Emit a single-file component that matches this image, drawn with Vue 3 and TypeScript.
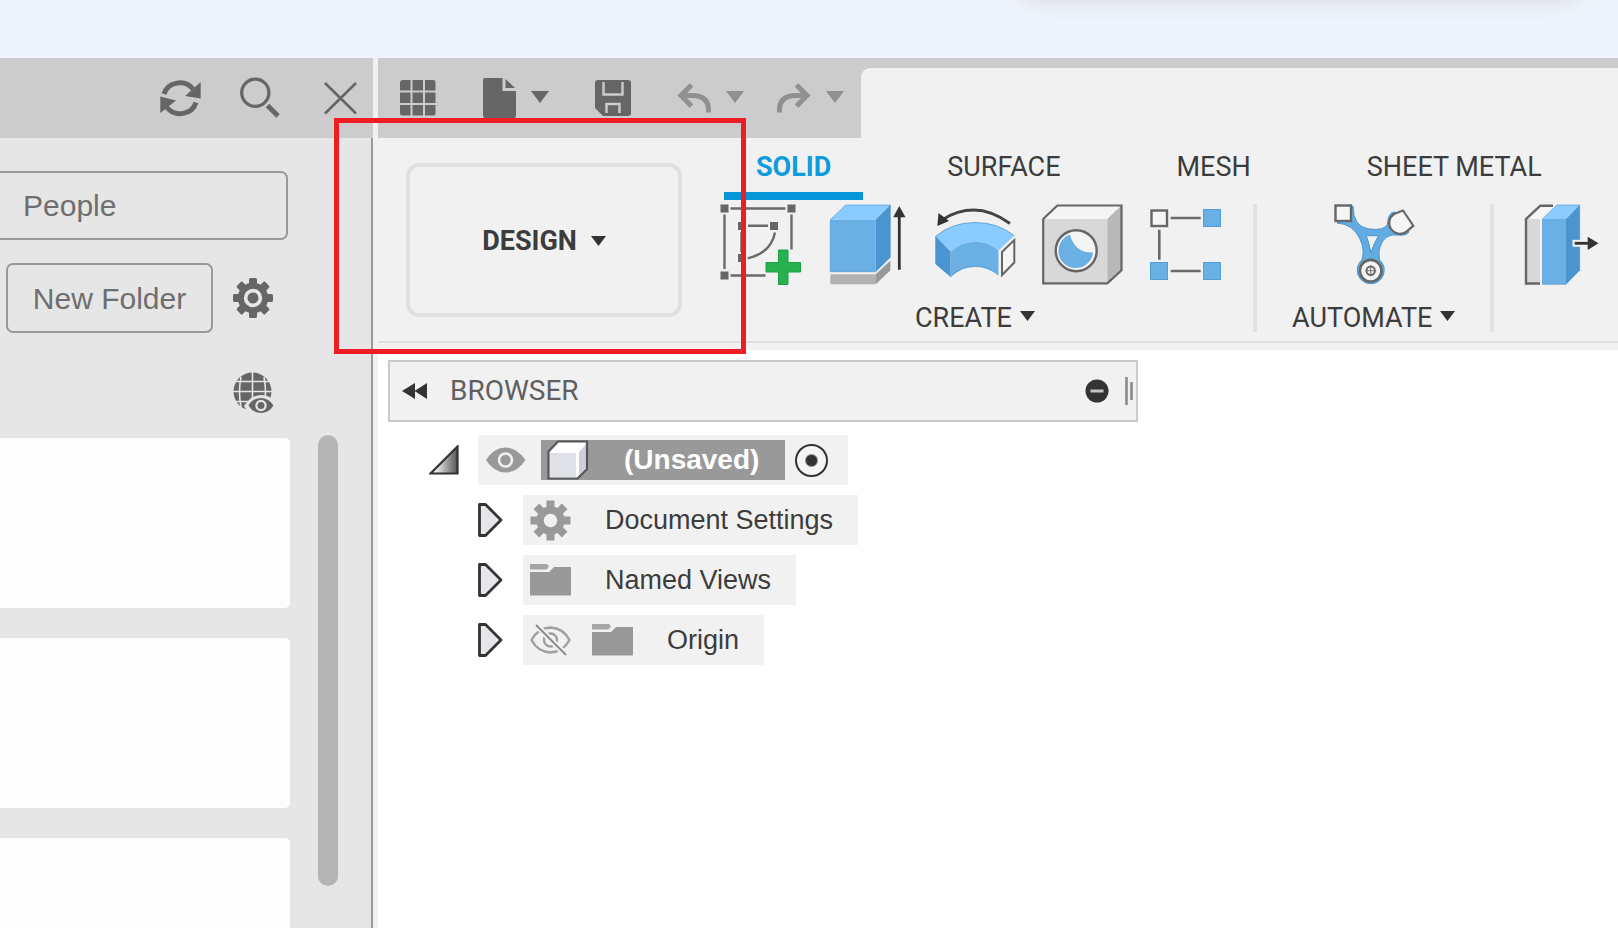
<script setup lang="ts">
import { ref } from 'vue'

type Tab = { id: string; label: string }
type TreeNode = { label: string; hidden?: boolean; icon: 'gear' | 'folder' }

const tabs: Tab[] = [
  { id: 'solid', label: 'SOLID' },
  { id: 'surface', label: 'SURFACE' },
  { id: 'mesh', label: 'MESH' },
  { id: 'sheet', label: 'SHEET METAL' },
]
const activeTab = ref('solid')

const nodes: TreeNode[] = [
  { label: 'Document Settings', icon: 'gear' },
  { label: 'Named Views', icon: 'folder' },
  { label: 'Origin', icon: 'folder', hidden: true },
]

const teeth = [0, 45, 90, 135, 180, 225, 270, 315]
const gridCells = [0, 1, 2, 3, 4, 5, 6, 7, 8]
</script>

<template>
  <div class="page">
    <div class="backdrop"><div class="floating"></div></div>

    <div class="app">
      <aside class="data-panel">
        <header class="panel-head">
          <button class="bare" aria-label="Refresh">
            <svg width="42" height="42" viewBox="0 0 42 42">
              <g fill="none" stroke="#666" stroke-width="5">
                <path d="M5 17A16.5 15.5 0 0 1 34 12" />
                <path d="M37 25.5A16.5 15.5 0 0 1 8 30.5" />
              </g>
              <path d="M41.700 5V21.600L26 19ZM1.300 19.500V36L17 23.500Z" fill="#666" />
            </svg>
          </button>
          <button class="bare" aria-label="Search">
            <svg width="42" height="42" viewBox="0 0 42 42" fill="none" stroke="#666">
              <circle cx="16.300" cy="15.700" r="13.600" stroke-width="3.200" />
              <path d="M28.500 28.500L39 39" stroke-width="5" />
            </svg>
          </button>
          <button class="bare" aria-label="Close panel">
            <svg width="44" height="42" viewBox="0 0 44 42">
              <path d="M6 6L37 36.500M37 6L6 36.500" stroke="#666" stroke-width="2.600" />
            </svg>
          </button>
        </header>

        <button class="outlined people">People</button>
        <div class="folder-row">
          <button class="outlined folder-btn">New Folder</button>
          <button class="bare" aria-label="Settings">
            <svg width="42" height="42" viewBox="-21 -21 42 42">
              <rect v-for="a in teeth" :key="a" x="-4" y="-20" width="8" height="9" rx="1.500" fill="#666" :transform="`rotate(${a})`" />
              <circle r="12.200" fill="none" stroke="#666" stroke-width="6" />
              <circle r="5.500" fill="#666" />
            </svg>
          </button>
        </div>
        <div class="web-row">
          <button class="bare" aria-label="Open on the web">
            <svg width="42" height="42" viewBox="0 0 42 42">
              <circle cx="19.500" cy="19.500" r="19" fill="#666" />
              <path d="M19.500 0V40M0 19.500H40M3 9.500H36M3 29.500H36M8 5Q5 20 8 35M31 5Q34 20 31 35" fill="none" stroke="#e6e6e6" stroke-width="1.600" />
              <path d="M11 34Q18 23 28.500 23T44 34V42H16Z" fill="#e6e6e6" />
              <path d="M15.500 33.500Q20 26 28 26T40.500 33.500Q36 41 28 41T15.500 33.500Z" fill="#666" />
              <circle cx="28" cy="33.500" r="4.600" fill="#666" stroke="#e6e6e6" stroke-width="2.200" />
            </svg>
          </button>
        </div>
        <div class="list">
          <div class="cards">
            <div v-for="n in 3" :key="n" class="card"></div>
          </div>
          <div class="scrollbar"></div>
        </div>
      </aside>

      <main class="workspace">
        <div class="quick-bar">
          <nav class="quick-tools" aria-label="Quick access">
            <button class="bare" aria-label="Show data panel">
              <svg width="36" height="36" viewBox="0 0 36 36">
                <clipPath id="grid-clip"><rect width="36" height="36" rx="3" /></clipPath>
                <g clip-path="url(#grid-clip)">
                  <rect v-for="c in gridCells" :key="c" :x="(c % 3) * 12.5" :y="Math.floor(c / 3) * 12.5" width="10.500" height="10.500" fill="#666" />
                </g>
              </svg>
            </button>
            <div class="pair">
              <button class="bare" aria-label="File">
                <svg width="34" height="40" viewBox="0 0 34 40" fill="#666">
                  <path d="M3 0H20.500V13H34V38Q34 40 32 40H3Q1 40 1 38V2Q1 0 3 0Z" />
                  <path d="M23.500 1L33 10H23.500Z" />
                </svg>
              </button>
              <button class="bare" aria-label="File menu">
                <svg class="caret" width="18" height="12" viewBox="0 0 18 12"><path d="M0 0H18L9 12Z" fill="#666" /></svg>
              </button>
            </div>
            <button class="bare" aria-label="Save">
              <svg width="36" height="36" viewBox="0 0 36 36">
                <path d="M3 0H33Q36 0 36 3V33Q36 36 33 36H8L0 28V3Q0 0 3 0Z" fill="#666" />
                <path d="M8.500 2V14.500H27.500V2M11.500 33V24H24.500V33" fill="none" stroke="#ccc" stroke-width="2.400" />
              </svg>
            </button>
            <div class="history">
              <div class="pair">
                <button class="bare" aria-label="Undo">
                  <svg width="34" height="36" viewBox="0 0 34 36" fill="none" stroke="#909090" stroke-width="5">
                    <path d="M31.500 32.500V30Q31.500 15.500 15 15.500H4" />
                    <path d="M14.500 5L4 15.500L14.500 26" />
                  </svg>
                </button>
                <button class="bare" aria-label="Undo history">
                  <svg class="caret" width="18" height="12" viewBox="0 0 18 12"><path d="M0 0H18L9 12Z" fill="#909090" /></svg>
                </button>
              </div>
              <div class="pair">
                <button class="bare" aria-label="Redo">
                  <svg width="34" height="36" viewBox="0 0 34 36" fill="none" stroke="#909090" stroke-width="5">
                    <path d="M2.500 32.500V30Q2.500 15.500 19 15.500H30" />
                    <path d="M19.500 5L30 15.500L19.500 26" />
                  </svg>
                </button>
                <button class="bare" aria-label="Redo history">
                  <svg class="caret" width="18" height="12" viewBox="0 0 18 12"><path d="M0 0H18L9 12Z" fill="#909090" /></svg>
                </button>
              </div>
            </div>
          </nav>
          <div class="document-tab"></div>
        </div>

        <section class="ribbon">
          <button class="design">
            DESIGN
            <svg width="15" height="10" viewBox="0 0 15 10"><path d="M0 0H15L7.500 10Z" fill="#333" /></svg>
          </button>

          <div class="ribbon-body">
            <nav class="tabs">
              <button v-for="t in tabs" :key="t.id" class="tab" :class="{ active: t.id === activeTab }" @click="activeTab = t.id">
                {{ t.label }}
              </button>
            </nav>

            <div class="groups">
              <div class="group create">
                <div class="tools">
                  <button class="bare" aria-label="Create sketch">
                    <svg width="82" height="82" viewBox="0 0 82 82">
                      <g fill="#666">
                        <rect x="0.500" y="0.500" width="8" height="8" /><rect x="67.500" y="0.500" width="8" height="8" />
                        <rect x="0.500" y="67.500" width="8" height="8" /><rect x="18" y="18" width="8" height="8" />
                        <rect x="50" y="18" width="8" height="8" /><rect x="18" y="50" width="8" height="8" />
                      </g>
                      <path d="M10.500 4.500H65.500M4.500 10.500V65M71.500 10.500V45.500M10.500 71.500H45.500M28 21.700H48M21.500 28V48M55 28.500Q51 49 27.700 54.300" fill="none" stroke="#6a6a6a" stroke-width="2.400" />
                      <path d="M58.500 46H68V58.500H80.500V68H68V80.500H58.500V68H46V58.500H58.500Z" fill="#27b150" stroke="#1c9e43" />
                    </svg>
                  </button>
                  <button class="bare" aria-label="Extrude">
                    <svg width="82" height="82" viewBox="0 0 82 82">
                      <path d="M3.300 70.300H48.700V80.300H3.300Z" fill="#b2b2b2" />
                      <path d="M48.700 70.300L63.300 56.700V66.500L48.700 80.300Z" fill="#989898" />
                      <path d="M3.300 15.700L18.700 1H63.300L48.700 15.700Z" fill="#8accff" />
                      <path d="M3.300 15.700H48.700V67.700H3.300Z" fill="#6ab0e5" />
                      <path d="M48.700 15.700L63.300 1V53.300L48.700 67.700Z" fill="#4a95cf" />
                      <path d="M3.300 15.700L18.700 1H63.300V53.300L48.700 67.700H3.300Z" fill="none" stroke="#4393cf" stroke-opacity="0.600" />
                      <path d="M72.300 12V65.700" stroke="#333" stroke-width="2.800" />
                      <path d="M72.300 2L78.500 13.300H66.200Z" fill="#333" />
                    </svg>
                  </button>
                  <button class="bare" aria-label="Revolve">
                    <svg width="82" height="82" viewBox="0 0 82 82">
                      <path d="M1.700 32.300Q18 18.500 41 18.500T80.300 31.700L65 46Q55 37.700 41 37.700T16.700 47.700Z" fill="#8accff" />
                      <path d="M1.700 32.300L16.700 47.700V72.700L1.700 60Z" fill="#4a95cf" />
                      <path d="M16.700 47.700Q27 37.700 41 37.700T64.500 46V71Q54 62.500 41 62.500T16.700 72.700Z" fill="#6ab0e5" />
                      <path d="M1.700 32.300Q18 18.500 41 18.500T80.300 31.700M1.700 32.300V60L16.700 72.700Q27 62.500 41 62.500T64 71" fill="none" stroke="#4393cf" stroke-opacity="0.700" />
                      <path d="M68 48L80.300 36V58.500L68 71Z" fill="#f5f5f5" stroke="#666" stroke-width="2" />
                      <path d="M9 15.500Q23 6 40 6T76 19.500" fill="none" stroke="#444" stroke-width="2.800" />
                      <path d="M3.300 22L4.500 9L15 17Z" fill="#333" />
                    </svg>
                  </button>
                  <button class="bare" aria-label="Hole">
                    <svg width="82" height="82" viewBox="1 0 82 82">
                      <path d="M3.200 15L17.300 1.500H81.500L67.300 15Z" fill="#f4f4f4" />
                      <path d="M3.200 15H67.300V79.300H3.200Z" fill="#d8d8d8" />
                      <path d="M67.300 15L81.500 1.500V66.300L67.300 79.300Z" fill="#b8b8b8" />
                      <path d="M3.200 15L17.300 1.500H81.500V66.300L67.300 79.300H3.200Z" fill="none" stroke="#666" stroke-width="2.200" />
                      <circle cx="36.200" cy="46.700" r="20.500" fill="#f4f4f4" stroke="#666" stroke-width="2.400" />
                      <path d="M30 30.500A17.300 17.300 0 1 0 53 48.500Q34.500 49 30 30.500Z" fill="#6ab0e5" />
                    </svg>
                  </button>
                  <button class="bare" aria-label="Rectangular pattern">
                    <svg width="82" height="82" viewBox="0 0 82 82">
                      <path d="M22.700 14H52.700M22.700 67H52.700M11.300 25.700V55.700" stroke="#6a6a6a" stroke-width="2.600" />
                      <rect x="3.500" y="6.500" width="15.500" height="15.500" fill="#f5f5f5" stroke="#666" stroke-width="2.400" />
                      <g fill="#6ab0e5" stroke="#4f9fd9">
                        <rect x="55.500" y="5.500" width="17" height="17" /><rect x="2.500" y="58.500" width="17" height="17" />
                        <rect x="55.500" y="58.500" width="17" height="17" />
                      </g>
                    </svg>
                  </button>
                </div>
                <button class="group-label">
                  CREATE
                  <svg width="15" height="10" viewBox="0 0 15 10"><path d="M0 0H15L7.500 10Z" fill="#333" /></svg>
                </button>
              </div>

              <div class="group automate">
                <div class="tools">
                  <button class="bare" aria-label="Automated modeling">
                    <svg width="82" height="82" viewBox="0 0 82 82">
                      <path d="M20 2Q20 23 36 25Q52 27 54.500 20Q55 8 62 8L76 28Q73 32 66 31Q51 29 47 43Q45 49 46.500 56A13.500 13.500 0 1 1 29 56Q32 45 27 35Q20 20 4 19Z" fill="#63ace2" stroke="#4794cc" />
                      <path d="M33.300 31.700H45.500Q41 39 38 48.500Q36 39 33.300 31.700Z" fill="#f1f1f1" stroke="#4794cc" />
                      <rect x="2.500" y="1.500" width="15.500" height="15.500" fill="#f5f5f5" stroke="#666" stroke-width="2.400" />
                      <path d="M61 10L70 6.500L80.300 21.700L73 28A10 10 0 1 1 61 10Z" fill="#f5f5f5" stroke="#666" stroke-width="2.200" />
                      <circle cx="37.700" cy="66.700" r="10.800" fill="#f4f4f4" stroke="#666" stroke-width="2.600" />
                      <circle cx="37.700" cy="66.700" r="4.200" fill="none" stroke="#666" stroke-width="2" />
                      <path d="M37.700 61V72.400M32 66.700H43.400" stroke="#777" />
                    </svg>
                  </button>
                </div>
                <button class="group-label">
                  AUTOMATE
                  <svg width="15" height="10" viewBox="0 0 15 10"><path d="M0 0H15L7.500 10Z" fill="#333" /></svg>
                </button>
              </div>

              <div class="group modify">
                <div class="tools">
                  <button class="bare" aria-label="Press pull">
                    <svg width="82" height="82" viewBox="0 0 82 82">
                      <path d="M4 15L18.300 1.700H32L18.500 15Z" fill="#f6f6f6" />
                      <path d="M4 15H18V79.500H4Z" fill="#d8d8d8" />
                      <path d="M31 1.700H18.300L4 15V79.500H18" fill="none" stroke="#666" stroke-width="2.400" />
                      <path d="M20.500 15L35 1H57.700L44 15Z" fill="#8accff" />
                      <path d="M20.500 15H44V80.300H20.500Z" fill="#6ab0e5" />
                      <path d="M44 15L57.700 1V66.300L44 80.300Z" fill="#4a95cf" />
                      <path d="M20.500 15L35 1H57.700V66.300L44 80.300H20.500Z" fill="none" stroke="#4393cf" stroke-opacity="0.600" />
                      <path d="M50.500 39.300H64" stroke="#f1f1f1" stroke-width="7" />
                      <path d="M52.700 39.300H67" stroke="#333" stroke-width="2.800" />
                      <path d="M65.700 32.700L76.500 39.300L65.700 46Z" fill="#333" />
                    </svg>
                  </button>
                </div>
              </div>
            </div>
          </div>
        </section>

        <section class="canvas">
          <header class="browser-head">
            <button class="bare" aria-label="Collapse browser">
              <svg width="28" height="16" viewBox="0 0 28 16"><path d="M15 0V16L2 8ZM27 0V16L14.500 8Z" fill="#333" /></svg>
            </button>
            <h2>BROWSER</h2>
            <button class="bare" aria-label="Minimize browser">
              <svg width="24" height="24" viewBox="0 0 24 24">
                <circle cx="12" cy="12" r="11.500" fill="#333" /><path d="M5.500 12H18.500" stroke="#c4c4c4" stroke-width="3" />
              </svg>
            </button>
            <svg class="grip" width="8" height="28" viewBox="0 0 8 28">
              <path d="M1.500 0V28M6.500 5V23" stroke="#8a8a8a" stroke-width="2.600" />
            </svg>
          </header>

          <ul class="tree">
            <li class="node root">
              <button class="bare" aria-label="Collapse document">
                <svg width="30" height="30" viewBox="0 0 30 30">
                  <defs><linearGradient id="fold" x1="0.200" x2="1"><stop stop-color="#eee" /><stop offset="1" stop-color="#555" /></linearGradient></defs>
                  <path d="M1.500 28.500L28.500 1.500V28.500Z" fill="url(#fold)" stroke="#333" stroke-width="2.200" />
                </svg>
              </button>
              <div class="chip">
                <button class="bare" aria-label="Toggle visibility">
                  <svg width="42" height="26" viewBox="0 0 42 26">
                    <path d="M1 13Q9 0.500 20.500 0.500T40.500 13Q32 25.500 20.500 25.500T1 13Z" fill="#999" />
                    <circle cx="20.500" cy="13" r="6.500" fill="#999" stroke="#f1f1f1" stroke-width="2.600" />
                  </svg>
                </button>
                <span class="selected">
                  <svg width="42" height="40" viewBox="0 0 42 40">
                    <path d="M1.500 11.500L11 1.500H40V29L30.500 38.500H1.500Z" fill="#fff" />
                    <path d="M3 13H29V37H3Z" fill="#e0e1e6" />
                    <path d="M32 12L39 4V28L32 35Z" fill="#cfd0d7" />
                    <path d="M1.500 11.500L11 1.500H40V29L30.500 38.500H1.500Z" fill="none" stroke="#53555a" stroke-width="2.200" />
                  </svg>
                  (Unsaved)
                </span>
                <input class="activate" type="radio" checked aria-label="Activate document" />
              </div>
            </li>
            <li v-for="n in nodes" :key="n.label" class="node">
              <button class="bare" :aria-label="`Expand ${n.label}`">
                <svg width="25" height="34" viewBox="0 0 25 34">
                  <path d="M1.500 1.500H7.500L23 17L7.500 32.500H1.500Z" fill="#e6e7ea" stroke="#333" stroke-width="2.800" stroke-linejoin="round" />
                </svg>
              </button>
              <div class="chip">
                <button v-if="n.hidden" class="bare" :aria-label="`Show ${n.label}`">
                  <svg width="41" height="32" viewBox="0 0 41 32" fill="none" stroke="#a0a0a0">
                    <path d="M1.500 16Q8 4 20.500 3.500Q33 4 39.500 16Q33 28 20.500 28.500Q8 28 1.500 16Z" stroke-width="2.400" />
                    <circle cx="20.500" cy="16" r="6.500" stroke-width="2.400" />
                    <path d="M6 1L36 31" stroke="#f1f1f1" stroke-width="6" />
                    <path d="M6 1L36 31" stroke="#888" stroke-width="1.800" />
                  </svg>
                </button>
                <svg v-if="n.icon === 'gear'" width="41" height="41" viewBox="-20.5 -20.5 41 41">
                  <rect v-for="a in teeth" :key="a" x="-4" y="-20" width="8" height="9" fill="#999" :transform="`rotate(${a})`" />
                  <circle r="10.500" fill="none" stroke="#999" stroke-width="7.500" />
                </svg>
                <svg v-else width="41" height="34" viewBox="0 0 41 34" fill="#999">
                  <path d="M0 1H17L19 3.500L16.500 6.500H0Z" opacity="0.850" />
                  <path d="M0 9H19L24 4H41V32.500H0Z" />
                </svg>
                <span class="node-label">{{ n.label }}</span>
              </div>
            </li>
          </ul>
        </section>
      </main>
    </div>

    <div class="highlight"></div>
  </div>
</template>

<style>
body {
  margin: 0;
}
</style>

<style scoped>
.page {
  position: relative;
  display: flex;
  flex-direction: column;
  height: 100vh;
  overflow: hidden;
  font-family: "Liberation Sans", Arial, sans-serif;
  color: #3c3c3c;
  background: #fff;
}
.page * {
  box-sizing: border-box;
}
svg {
  display: block;
  flex: none;
}
button {
  font: inherit;
  color: inherit;
  cursor: pointer;
}
.bare {
  display: block;
  flex: none;
  padding: 0;
  border: 0;
  background: none;
}
.backdrop {
  position: relative;
  flex: none;
  height: 58px;
  overflow: hidden;
  background: #eff3fb;
}
.floating {
  position: absolute;
  top: -40px;
  right: 40px;
  width: 556px;
  height: 36px;
  border-radius: 12px;
  box-shadow: 0 4px 22px rgba(70, 70, 60, 0.15);
}
.app {
  display: flex;
  flex: 1;
  min-height: 0;
}

/* Data panel */
.data-panel {
  display: flex;
  flex-direction: column;
  flex: none;
  width: 373px;
  background: #e6e6e6;
  box-shadow: inset -2px 0 #999;
}
.panel-head {
  display: flex;
  flex: none;
  align-items: center;
  justify-content: flex-end;
  gap: 38px;
  height: 80px;
  padding-right: 10px;
  background: #ccc;
}
.outlined {
  border: 2px solid #999;
  border-radius: 7px;
  background: #e6e6e6;
  color: #6e6e6e;
  font-size: 30px;
  line-height: 34px;
}
.people {
  width: 288px;
  height: 69px;
  margin-top: 33px;
  padding: 0 0 0 23px;
  border-left: 0;
  border-radius: 0 7px 7px 0;
  text-align: left;
}
.folder-row {
  display: flex;
  align-items: center;
  gap: 19px;
  margin-top: 23px;
  padding-left: 6px;
}
.folder-btn {
  width: 207px;
  height: 70px;
  padding: 2px 0 0;
}
.web-row {
  display: flex;
  justify-content: flex-end;
  margin-top: 39px;
  padding-right: 98px;
}
.list {
  display: flex;
  flex: 1;
  gap: 28px;
  min-height: 0;
  margin-top: 21px;
  overflow: hidden;
}
.cards {
  display: flex;
  flex-direction: column;
  gap: 30px;
  width: 290px;
  padding-top: 3px;
}
.card {
  flex: none;
  height: 170px;
  border-radius: 0 5px 5px 0;
  background: #fdfdfd;
}
.scrollbar {
  width: 20px;
  margin-bottom: 42px;
  border-radius: 10px;
  background: #b5b5b5;
}

/* Workspace */
.workspace {
  display: flex;
  flex: 1;
  flex-direction: column;
  min-width: 0;
  border-left: 5px solid #f1f1f1;
  overflow: hidden;
}
.quick-bar {
  display: flex;
  flex: none;
  height: 80px;
  background: #ccc;
}
.quick-tools {
  display: flex;
  flex: none;
  align-items: center;
  gap: 46px;
  padding: 0 17px 0 22px;
}
.pair {
  display: flex;
  align-items: center;
  gap: 15px;
}
.caret {
  margin-bottom: 3px;
}
.history {
  display: flex;
  gap: 33px;
}
.document-tab {
  flex: 1;
  margin-top: 10px;
  border-radius: 9px 0 0;
  background: #f1f1f1;
}
.ribbon {
  display: flex;
  flex: none;
  gap: 38px;
  height: 212px;
  padding-left: 28px;
  background: linear-gradient(#e0e0e0, #e0e0e0) 0 203px / 100% 2px no-repeat #f1f1f1;
  font-family: Roboto, "Liberation Sans", sans-serif;
  font-size: 27px;
  line-height: 32px;
}
.design {
  display: flex;
  flex: none;
  align-items: center;
  justify-content: center;
  gap: 14px;
  width: 276px;
  height: 154px;
  margin-top: 25px;
  padding: 2px 0 0;
  border: 4px solid #e0e0e0;
  border-radius: 13px;
  background: #f1f1f1;
  font-weight: 700;
}
.ribbon-body {
  flex: 1;
  min-width: 0;
}
.tabs {
  display: flex;
  gap: 52px;
  padding: 11px 0 0 4px;
}
.tab {
  height: 51px;
  padding: 2px 32px 10px;
  border: 0;
  border-bottom: 8px solid transparent;
  background: none;
  white-space: nowrap;
}
.tab.active {
  border-color: #0696d7;
  color: #0f9bdc;
  font-weight: 700;
}
.groups {
  display: flex;
  margin-top: 4px;
}
.group {
  display: flex;
  flex: none;
  flex-direction: column;
  align-items: center;
  height: 128px;
}
.group + .group {
  border-left: 4px solid #e2e2e2;
}
.create {
  padding-right: 23px;
}
.automate {
  padding: 0 35px;
}
.modify {
  padding: 0 16px 0 28px;
}
.tools {
  display: flex;
  gap: 25px;
}
.group-label {
  display: flex;
  align-items: center;
  gap: 8px;
  margin-top: 16px;
  padding: 0;
  border: 0;
  background: none;
}
.group-label svg {
  margin-bottom: 4px;
}
.canvas {
  flex: 1;
  padding: 10px;
  background: #fff;
}
.browser-head {
  display: flex;
  align-items: center;
  max-width: 750px;
  height: 62px;
  padding: 0 3px 0 10px;
  border: 2px solid #c9c9c9;
  background: #f1f1f1;
}
.browser-head h2 {
  flex: 1;
  margin: 0;
  padding-left: 22px;
  color: #606060;
  font: 400 28px/32px Roboto, "Liberation Sans", sans-serif;
}
.grip {
  margin-left: 16px;
}
.tree {
  display: flex;
  flex-direction: column;
  gap: 10px;
  margin: 13px 0 0;
  padding: 0 0 0 90px;
  list-style: none;
  font-size: 27px;
  line-height: 32px;
}
.node {
  display: flex;
  align-items: center;
  gap: 20px;
}
.root {
  gap: 19px;
  margin-left: -49px;
}
.chip {
  display: flex;
  align-items: center;
  height: 50px;
  padding: 0 25px 0 7px;
  background: #f1f1f1;
}
.chip > .bare {
  margin-right: 21px;
}
.root .chip {
  padding-right: 20px;
}
.root .chip > .bare {
  margin-right: 14px;
}
.selected {
  display: flex;
  align-items: center;
  gap: 35px;
  height: 40px;
  padding: 0 26px 0 6px;
  background: #999;
  color: #fff;
  font-size: 28px;
  font-weight: 700;
}
.activate {
  width: 33px;
  height: 33px;
  margin: 0 0 0 10px;
  border: 2px solid #333;
  border-radius: 50%;
  appearance: none;
  background: radial-gradient(circle, #333 5px, transparent 7px) #f5f5f5;
}
.node-label {
  padding-left: 34px;
}

/* Callout drawn over the workspace switcher */
.highlight {
  position: absolute;
  top: 118px;
  left: 334px;
  width: 412px;
  height: 236px;
  border: 5px solid #ee1c25;
  box-sizing: border-box;
  pointer-events: none;
}
</style>
